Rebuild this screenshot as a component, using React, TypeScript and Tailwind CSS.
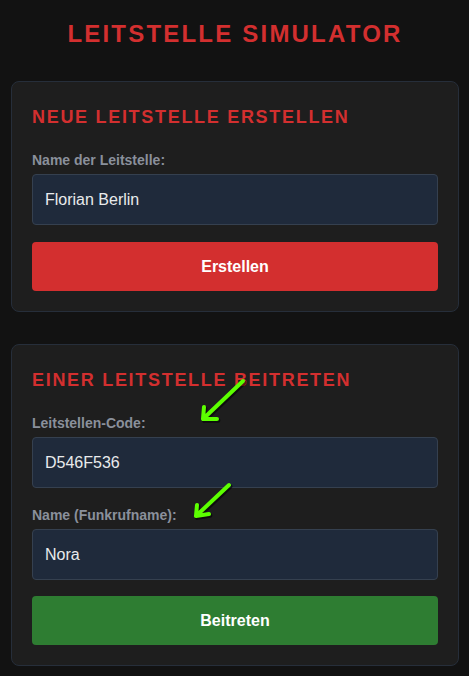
import React from "react";

function Arrow({ x1, y1, x2, y2, w1, w2 }: { x1: number; y1: number; x2: number; y2: number; w1: [number, number]; w2: [number, number] }) {
  const d = `M${x1} ${y1} L${x2} ${y2} M${w1[0]} ${w1[1]} L${x2} ${y2} L${w2[0]} ${w2[1]}`;
  return (
    <g>
      <path d={d} transform="translate(1.2 1.6)" stroke="rgba(0,0,0,0.55)" strokeWidth={4.5} fill="none" strokeLinecap="round" strokeLinejoin="round" />
      <path d={d} stroke="#5cff00" strokeWidth={4} fill="none" strokeLinecap="round" strokeLinejoin="round" />
    </g>
  );
}

function Field({ label, value, labelClass }: { label: string; value: string; labelClass: string }) {
  return (
    <>
      <label className={`block text-[14px] leading-[16px] font-bold text-[#8a909b] ${labelClass}`}>{label}</label>
      <div className="flex h-[51px] items-center rounded-[4px] border border-[#35404f] bg-[#1f2a3b] pl-[12px] text-[16px] text-[#e9eaec]">
        {value}
      </div>
    </>
  );
}

export default function App() {
  return (
    <div
      className="relative min-h-screen bg-[#121212] pl-[11px] pr-[10px] pt-[20px] pb-[10px]"
      style={{ fontFamily: '"Liberation Sans", Arial, sans-serif' }}
    >
      <h1 className="text-center text-[24px] leading-[28px] font-bold tracking-[2.2px] text-[#d32f2f]">
        LEITSTELLE SIMULATOR
      </h1>

      <div className="mt-[33px] rounded-[8px] border border-[#262e3a] bg-[#1e1e1e] px-[20px] pt-[24px] pb-[20px]">
        <h2 className="text-[18px] leading-[22px] font-bold tracking-[1.7px] text-[#d32f2f]">
          NEUE LEITSTELLE ERSTELLEN
        </h2>
        <Field label="Name der Leitstelle:" value="Florian Berlin" labelClass="mt-[24px] mb-[6px]" />
        <button className="mt-[17px] flex h-[49px] w-full items-center justify-center rounded-[4px] bg-[#d32f2f] text-[16px] font-bold text-white">
          Erstellen
        </button>
      </div>

      <div className="mt-[32px] rounded-[8px] border border-[#262e3a] bg-[#1e1e1e] px-[20px] pt-[24px] pb-[20px]">
        <h2 className="text-[18px] leading-[22px] font-bold tracking-[1.7px] text-[#d32f2f]">
          EINER LEITSTELLE BEITRETEN
        </h2>
        <Field label="Leitstellen-Code:" value="D546F536" labelClass="mt-[24px] mb-[6px]" />
        <Field label="Name (Funkrufname):" value="Nora" labelClass="mt-[19px] mb-[6px]" />
        <button className="mt-[16px] flex h-[49px] w-full items-center justify-center rounded-[4px] bg-[#2e7d32] text-[16px] font-bold text-white">
          Beitreten
        </button>
      </div>

      <svg className="pointer-events-none absolute top-0 left-0" width={469} height={676} viewBox="0 0 469 676">
        <Arrow x1={243} y1={381} x2={203} y2={419} w1={[204, 407]} w2={[217, 419]} />
        <Arrow x1={229} y1={485} x2={196} y2={516} w1={[197, 505]} w2={[209, 514]} />
      </svg>
    </div>
  );
}
